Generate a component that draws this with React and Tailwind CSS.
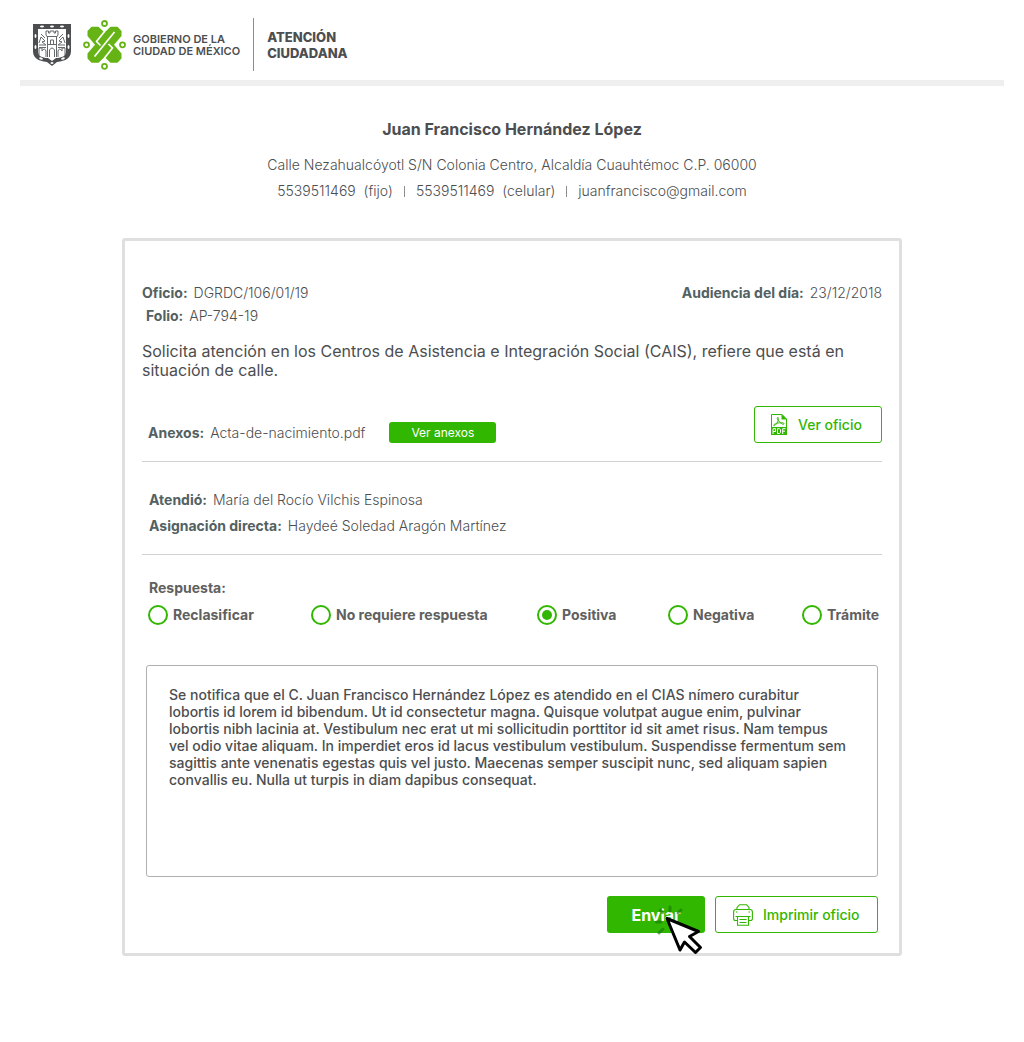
import React from "react";

const options = ["Reclasificar", "No requiere respuesta", "Positiva", "Negativa", "Trámite"];

const message =
  "Se notifica que el C. Juan Francisco Hernández López es atendido en el CIAS nímero curabitur lobortis id lorem id bibendum. Ut id consectetur magna. Quisque volutpat augue enim, pulvinar lobortis nibh lacinia at. Vestibulum nec erat ut mi sollicitudin porttitor id sit amet risus. Nam tempus vel odio vitae aliquam. In imperdiet eros id lacus vestibulum vestibulum. Suspendisse fermentum sem sagittis ante venenatis egestas quis vel justo. Maecenas semper suscipit nunc, sed aliquam sapien convallis eu. Nulla ut turpis in diam dapibus consequat.";

function Shield() {
  return (
    <svg width="38" height="42" viewBox="0 0 38 42" className="mt-px shrink-0" aria-hidden="true">
      <path d="M0 0H38V27C38 34 33 37 24 38L19 42L14 38C5 37 0 34 0 27Z" fill="#4c4e50" />
      <path d="M5 5H33V27C33 32 29 34 23 34L19 37L15 34C9 34 5 32 5 27Z" fill="#fff" />
      <g fill="#fff">
        <ellipse cx="9" cy="2.5" rx="2" ry="1" />
        <ellipse cx="19" cy="2.5" rx="2" ry="1" />
        <ellipse cx="29" cy="2.5" rx="2" ry="1" />
        <ellipse cx="2.5" cy="12" rx="1" ry="2" />
        <ellipse cx="2.5" cy="23" rx="1" ry="2" />
        <ellipse cx="35.5" cy="12" rx="1" ry="2" />
        <ellipse cx="35.5" cy="23" rx="1" ry="2" />
        <ellipse cx="8" cy="34.5" rx="2" ry="1" transform="rotate(25 8 34.5)" />
        <ellipse cx="30" cy="34.5" rx="2" ry="1" transform="rotate(-25 30 34.5)" />
        <ellipse cx="19" cy="39" rx="1.5" ry="1" />
      </g>
      <g stroke="#66696b" fill="none" strokeWidth="1">
        <path d="M14.500 33V13L13 11V7h2.500v2H17V7h4v2h1.500V7H25v4l-1.500 2v20M14 12.500h10M14 20.500h10M17.500 20v-4h3v4M16.500 33v-7q2.500-4 5 0v7" />
        <path d="M6 19l2-6 4 4-3 1 4 3H6M32 19l-2-6-4 4 3 1-4 3h7M6 31v-7h3v3q2.500-4 4 0v6M32 31v-7h-3v3q-2.500-4-4 0v6M8 10l4 4M30 10l-4 4M6 23.500h7M25 23.500h7" />
      </g>
    </svg>
  );
}

function CityLogo() {
  return (
    <svg width="43" height="50" viewBox="0 0 43 50" className="shrink-0" aria-hidden="true">
      <path
        d="M8.500 6.700H15.500L21.500 12.500L27.500 6.700H34.500L38.500 11V16L31 24.700L38.500 33.500V38.500L34.500 42.700H27.500L21.500 37L15.500 42.700H8.500L4.500 38.500V33.500L12 24.700L4.500 16V11Z"
        fill="#65b314"
      />
      <g fill="none" stroke="#fff" strokeWidth="1.700">
        <path d="M21.500 11.500L13.500 21.500" />
        <path d="M31.500 12L11.500 36.500" />
        <path d="M21.500 38L29.500 28" />
        <path d="M13 21L17.500 25.500M25.500 24L30 28.500" />
      </g>
      <g fill="none" stroke="#65b314" strokeWidth="1.800">
        <circle cx="21.500" cy="3.500" r="2.500" />
        <circle cx="21.500" cy="46.300" r="2.500" />
        <circle cx="3.500" cy="24.800" r="2.500" />
        <circle cx="39.500" cy="24.800" r="2.500" />
      </g>
    </svg>
  );
}

function PdfIcon() {
  return (
    <svg width="16" height="21" viewBox="0 0 16 21" aria-hidden="true">
      <path d="M.5 13V.5H11L15.500 5V13" fill="none" stroke="#31b700" />
      <path d="M10.500 0V5.500H16Z" fill="#31b700" />
      <path
        d="M6.500 3.500c1.500-.5 1 2.500 0 4.500S3.500 12.500 2.700 11.500 6 9 9 8.700s4.500.5 4 1.300-3-.3-4.500-2S5.500 4 6.500 3.500Z"
        fill="none"
        stroke="#31b700"
        strokeWidth=".9"
      />
      <rect y="13" width="16" height="8" fill="#31b700" />
      <path
        d="M2 20V14.700H4.500V17.500H2M6.500 14.700V19.500H8.500L9.500 18.500V15.700L8.500 14.700H6.500M11.700 20V14.700H14.500M11.700 17.200H14"
        fill="none"
        stroke="#fff"
        strokeWidth="1"
      />
    </svg>
  );
}

function PrinterIcon() {
  return (
    <svg width="20" height="22" viewBox="0 0 20 22" fill="none" stroke="#31b700" strokeWidth="1.100" aria-hidden="true">
      <path d="M4 5.500V3.500L6.500 .7H13.500L16 3.500V5.500" />
      <path d="M4 16.500H2.500Q.6 16.500 .6 14.500V8Q.6 5.500 3 5.500H17Q19.400 5.500 19.400 8V14.500Q19.400 16.500 17.500 16.500H16" />
      <path d="M3 8H4.500M15.500 8H17M2.500 12.500H17.500" />
      <path d="M4.500 12.500V21.300H15.500V12.500M6.500 15.500H13.500M6.500 18.500H13.500" />
    </svg>
  );
}

function ClickCursor() {
  return (
    <svg
      width="50"
      height="54"
      viewBox="0 0 50 54"
      className="pointer-events-none absolute top-2 left-[48px]"
      aria-hidden="true"
    >
      <g stroke="#1a7a10" strokeOpacity=".65" strokeWidth="3" strokeLinecap="round">
        <path d="M15 3V7M26 6L23 9M5.500 6L7.500 8.500M1.500 18H6M8 25L4 29" />
      </g>
      <path
        d="M12 14.500L43.500 27.500L34.500 32.500L45.500 43.500L40.500 48.500L29.500 38L25 46Z"
        fill="#fff"
        stroke="#000"
        strokeWidth="3"
        strokeLinejoin="round"
      />
    </svg>
  );
}

function Field({ label, children }) {
  return (
    <p className="font-light">
      <b className="mr-1.5 font-bold text-[#536162]">{label}</b>
      {children}
    </p>
  );
}

export default function App() {
  return (
    <div className="bg-white pb-[86px] font-[Inter,sans-serif] text-sm leading-5 text-[#4c4e50]">
      <header className="mx-5 flex items-center border-b-6 border-[#efefef] pt-[18px] pb-[9px] pl-[13px]">
        <Shield />
        <div className="ml-3 flex">
          <CityLogo />
        </div>
        <p className="ml-[7px] text-[11px] leading-3 font-semibold">
          GOBIERNO DE LA
          <br />
          CIUDAD DE MÉXICO
        </p>
        <h1 className="ml-[13px] flex h-[53px] flex-col justify-center border-l border-[#8b8d8e] pl-[13px] text-[13px] leading-4 font-extrabold">
          <span>ATENCIÓN</span>
          <span>CIUDADANA</span>
        </h1>
      </header>

      <main>
        <section className="px-4 pt-8 text-center leading-[26px] font-light">
          <h2 className="mb-3 text-base leading-[22px] font-bold">Juan Francisco Hernández López</h2>
          <p>Calle Nezahualcóyotl S/N Colonia Centro, Alcaldía Cuauhtémoc C.P. 06000</p>
          <div className="flex flex-wrap items-center justify-center gap-x-[11px]">
            <span>5539511469&nbsp; (fijo)</span>
            <span className="h-[11px] w-px bg-[#8b8d8e]" />
            <span>5539511469&nbsp; (celular)</span>
            <span className="h-[11px] w-px bg-[#8b8d8e]" />
            <span>juanfrancisco@gmail.com</span>
          </div>
        </section>

        <section className="mx-auto mt-[34px] max-w-[780px] rounded-[3px] border-3 border-[#dfdfdf] px-[17px] pt-[42px] pb-5">
          <div className="flex flex-wrap justify-between">
            <div className="space-y-[3px]">
              <Field label="Oficio:">DGRDC/106/01/19</Field>
              <div className="pl-1">
                <Field label="Folio:">AP-794-19</Field>
              </div>
            </div>
            <Field label="Audiencia del día:">23/12/2018</Field>
          </div>

          <p className="mt-4 text-base leading-[19px]">
            Solicita atención en los Centros de Asistencia e Integración Social (CAIS), refiere que está en situación de calle.
          </p>

          <div className="mt-[26px] flex items-end justify-between border-b border-[#d0d0d0] pb-[18px]">
            <div className="flex items-center gap-6 pl-1.5">
              <Field label="Anexos:">Acta-de-nacimiento.pdf</Field>
              <button type="button" className="h-[21px] w-[107px] rounded-[3px] bg-[#31b700] text-xs text-white">
                Ver anexos
              </button>
            </div>
            <button
              type="button"
              className="flex h-[37px] w-32 items-center gap-[11px] rounded-[3px] border border-[#31b700] pl-4 font-medium text-[#31b700]"
            >
              <PdfIcon />
              Ver oficio
            </button>
          </div>

          <div className="space-y-1.5 border-b border-[#d0d0d0] pt-7 pb-[18px] pl-[7px]">
            <Field label="Atendió:">María del Rocío Vilchis Espinosa</Field>
            <Field label="Asignación directa:">Haydeé Soledad Aragón Martínez</Field>
          </div>

          <fieldset className="mt-[23px] pl-1.5 font-bold text-[#606060]">
            <legend className="pl-px">Respuesta:</legend>
            <div className="mt-[7px] grid grid-cols-[163fr_226fr_131fr_134fr_80px]">
              {options.map((option) => (
                <label key={option} className="flex items-center gap-[5px]">
                  <input
                    type="radio"
                    name="respuesta"
                    defaultChecked={option === "Positiva"}
                    className="size-5 shrink-0 appearance-none rounded-full border-2 border-[#31b700] bg-clip-content p-[3px] checked:bg-[#31b700]"
                  />
                  {option}
                </label>
              ))}
            </div>
          </fieldset>

          <div className="mt-10 px-1">
            <textarea
              aria-label="Respuesta"
              defaultValue={message}
              className="block h-[212px] w-full resize-none rounded-[3px] border border-[#b0b0b0] py-5 pr-7 pl-[22px] leading-[17px] font-medium"
            />
            <div className="mt-[19px] flex justify-end gap-2.5">
              <div className="relative">
                <button type="button" className="h-[37px] w-[98px] rounded-[3px] bg-[#31b700] text-base font-bold text-white">
                  Enviar
                </button>
                <ClickCursor />
              </div>
              <button
                type="button"
                className="flex h-[37px] w-[163px] items-center gap-2.5 rounded-[3px] border border-[#31b700] pl-[17px] font-medium text-[#31b700]"
              >
                <PrinterIcon />
                Imprimir oficio
              </button>
            </div>
          </div>
        </section>
      </main>
    </div>
  );
}
